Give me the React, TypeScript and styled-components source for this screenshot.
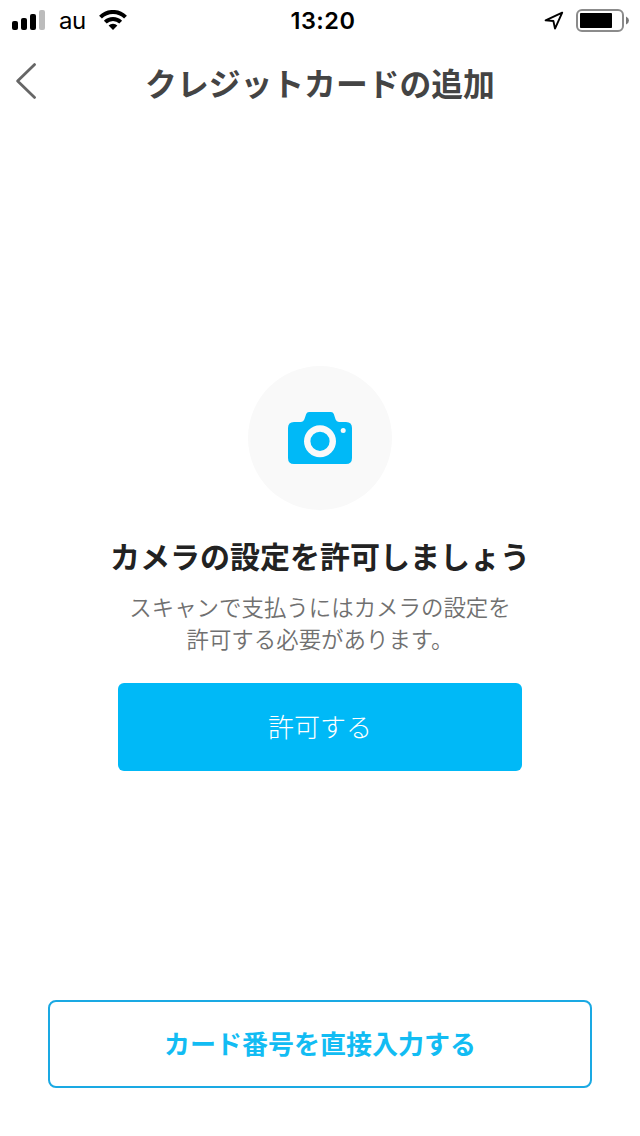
import React from "react";
import styled, { createGlobalStyle } from "styled-components";

const GlobalStyle = createGlobalStyle`
  * { box-sizing: border-box; }
  body { margin: 0; background: #fff; }
`;

const Screen = styled.div`
  width: 640px;
  height: 1136px;
  display: flex;
  flex-direction: column;
  background: #fff;
  font-family: "Noto Sans CJK JP", sans-serif;
  white-space: nowrap;
`;

const StatusBar = styled.header`
  height: 40px;
  display: grid;
  grid-template-columns: 1fr auto 1fr;
  align-items: center;
  padding: 0 10px 0 12px;
  font-family: Inter, sans-serif;
  color: #000;
`;

const StatusGroup = styled.div<{ $end?: boolean }>`
  height: 40px;
  display: flex;
  align-items: center;
  justify-content: ${(p) => (p.$end ? "flex-end" : "flex-start")};
  svg { display: block; flex: none; }
`;

const Carrier = styled.span`
  width: 26px;
  margin: 0 14px 0 14px;
  padding-top: 2px;
  font-size: 24px;
  line-height: 38px;
  letter-spacing: -0.6px;
`;

const Clock = styled.time`
  font-size: 23.5px;
  line-height: 38px;
  font-weight: 600;
  letter-spacing: 0.5px;
  padding: 2px 0 0 4px;
`;

const BatterySlot = styled.div`
  margin: 1px 0 0 12px;
`;

const NavBar = styled.nav`
  height: 88px;
  display: grid;
  grid-template-columns: 80px 1fr 80px;
  align-items: start;
`;

const BackButton = styled.button`
  width: 80px;
  height: 88px;
  padding: 0 0 6px 14px;
  border: 0;
  background: none;
  display: flex;
  align-items: center;
`;

const Title = styled.h1`
  margin: 0;
  text-align: center;
  font-size: 31.8px;
  line-height: 84px;
  font-weight: 700;
  color: #444;
`;

const Permission = styled.main`
  flex: 1;
  display: flex;
  flex-direction: column;
  align-items: center;
  padding-top: 238px;
`;

const IconCircle = styled.div`
  width: 144px;
  height: 144px;
  border-radius: 50%;
  background: #f9f9f9;
  display: flex;
  align-items: center;
  justify-content: center;
`;

const Heading = styled.h2`
  margin: 23px 0 0;
  font-size: 30px;
  line-height: 44px;
  font-weight: 700;
  color: #222;
`;

const Description = styled.p`
  margin: 13px 0 0;
  text-align: center;
  font-size: 22.45px;
  line-height: 32px;
  font-weight: 350;
  color: #707070;
`;

const Button = styled.button<{ $outline?: boolean }>`
  height: 88px;
  padding: 0 0 2px;
  font-family: inherit;
  font-size: 26px;
  line-height: 38px;
  width: ${(p) => (p.$outline ? "544px" : "404px")};
  font-weight: ${(p) => (p.$outline ? 700 : 300)};
  color: ${(p) => (p.$outline ? "#12bcf3" : "#fff")};
  background: ${(p) => (p.$outline ? "#fff" : "#00b9f7")};
  border: ${(p) => (p.$outline ? "2px solid #1aa9e3" : "0")};
  border-radius: ${(p) => (p.$outline ? "8px" : "6px")};
`;

const AllowSlot = styled.div`
  margin-top: 29px;
`;

const Footer = styled.footer`
  display: flex;
  justify-content: center;
  padding-bottom: 48px;
`;

const SignalIcon = () => (
  <svg width="33" height="20" viewBox="0 0 33 20">
    <rect x="0" y="11" width="6" height="9" rx="2" />
    <rect x="9" y="8" width="6" height="12" rx="2" />
    <rect x="18" y="4" width="6" height="16" rx="2" />
    <rect x="27" y="0" width="6" height="20" rx="2" fill="#bcbcbc" />
  </svg>
);

const WifiIcon = () => (
  <svg width="28" height="20" viewBox="0 0 28 20">
    <g fill="none" stroke="#000" strokeWidth="4">
      <path d="M1.5 7.1A17.7 17.7 0 0 1 26.5 7.1" />
      <path d="M6.3 12.1A11 11 0 0 1 21.7 12.1" />
    </g>
    <path d="M9.6 15.6A6.3 6.3 0 0 1 18.4 15.6L14 20Z" />
  </svg>
);

const LocationIcon = () => (
  <svg width="20" height="20" viewBox="0 0 20 20">
    <path d="M18.2 2.6L1.6 10.4L9.4 11L11 18.6Z" fill="none" stroke="#000" strokeWidth="1.9" strokeLinejoin="round" />
  </svg>
);

const BatteryIcon = () => (
  <svg width="54" height="24" viewBox="0 0 54 24">
    <rect x="1" y="1" width="46" height="21" rx="5" fill="none" stroke="#8b8b8b" strokeWidth="2" />
    <rect x="4" y="4" width="32" height="15" rx="0.8" />
    <path d="M50 7.5Q53 9 53 11.5T50 15.5Z" fill="#777" />
  </svg>
);

const BackIcon = () => (
  <svg width="24" height="38" viewBox="0 0 24 38">
    <path d="M20.6 2.6L3.6 19L20.6 35.4" fill="none" stroke="#666" strokeWidth="2.8" strokeLinecap="round" strokeLinejoin="round" />
  </svg>
);

const CameraIcon = () => (
  <svg width="64" height="52" viewBox="0 0 64 52">
    <path
      d="M21 0H43Q45 0 45.8 2L47.6 7.6Q48.5 10 51 10H58Q64 10 64 16V46Q64 52 58 52H6Q0 52 0 46V16Q0 10 6 10H13Q15.5 10 16.3 7.6L18.2 2Q19 0 21 0Z"
      fill="#00b9f7"
    />
    <circle cx="32" cy="29.3" r="12.8" fill="#00b9f7" stroke="#f9f9f9" strokeWidth="6.4" />
    <circle cx="55.2" cy="18.5" r="2.5" fill="#f9f9f9" />
  </svg>
);

export default function App() {
  return (
    <Screen>
      <GlobalStyle />
      <StatusBar>
        <StatusGroup>
          <SignalIcon />
          <Carrier>au</Carrier>
          <WifiIcon />
        </StatusGroup>
        <Clock>13:20</Clock>
        <StatusGroup $end>
          <LocationIcon />
          <BatterySlot>
            <BatteryIcon />
          </BatterySlot>
        </StatusGroup>
      </StatusBar>
      <NavBar>
        <BackButton aria-label="戻る">
          <BackIcon />
        </BackButton>
        <Title>クレジットカードの追加</Title>
      </NavBar>
      <Permission>
        <IconCircle>
          <CameraIcon />
        </IconCircle>
        <Heading>カメラの設定を許可しましょう</Heading>
        <Description>
          スキャンで支払うにはカメラの設定を
          <br />
          許可する必要があります。
        </Description>
        <AllowSlot>
          <Button>許可する</Button>
        </AllowSlot>
      </Permission>
      <Footer>
        <Button $outline>カード番号を直接入力する</Button>
      </Footer>
    </Screen>
  );
}
